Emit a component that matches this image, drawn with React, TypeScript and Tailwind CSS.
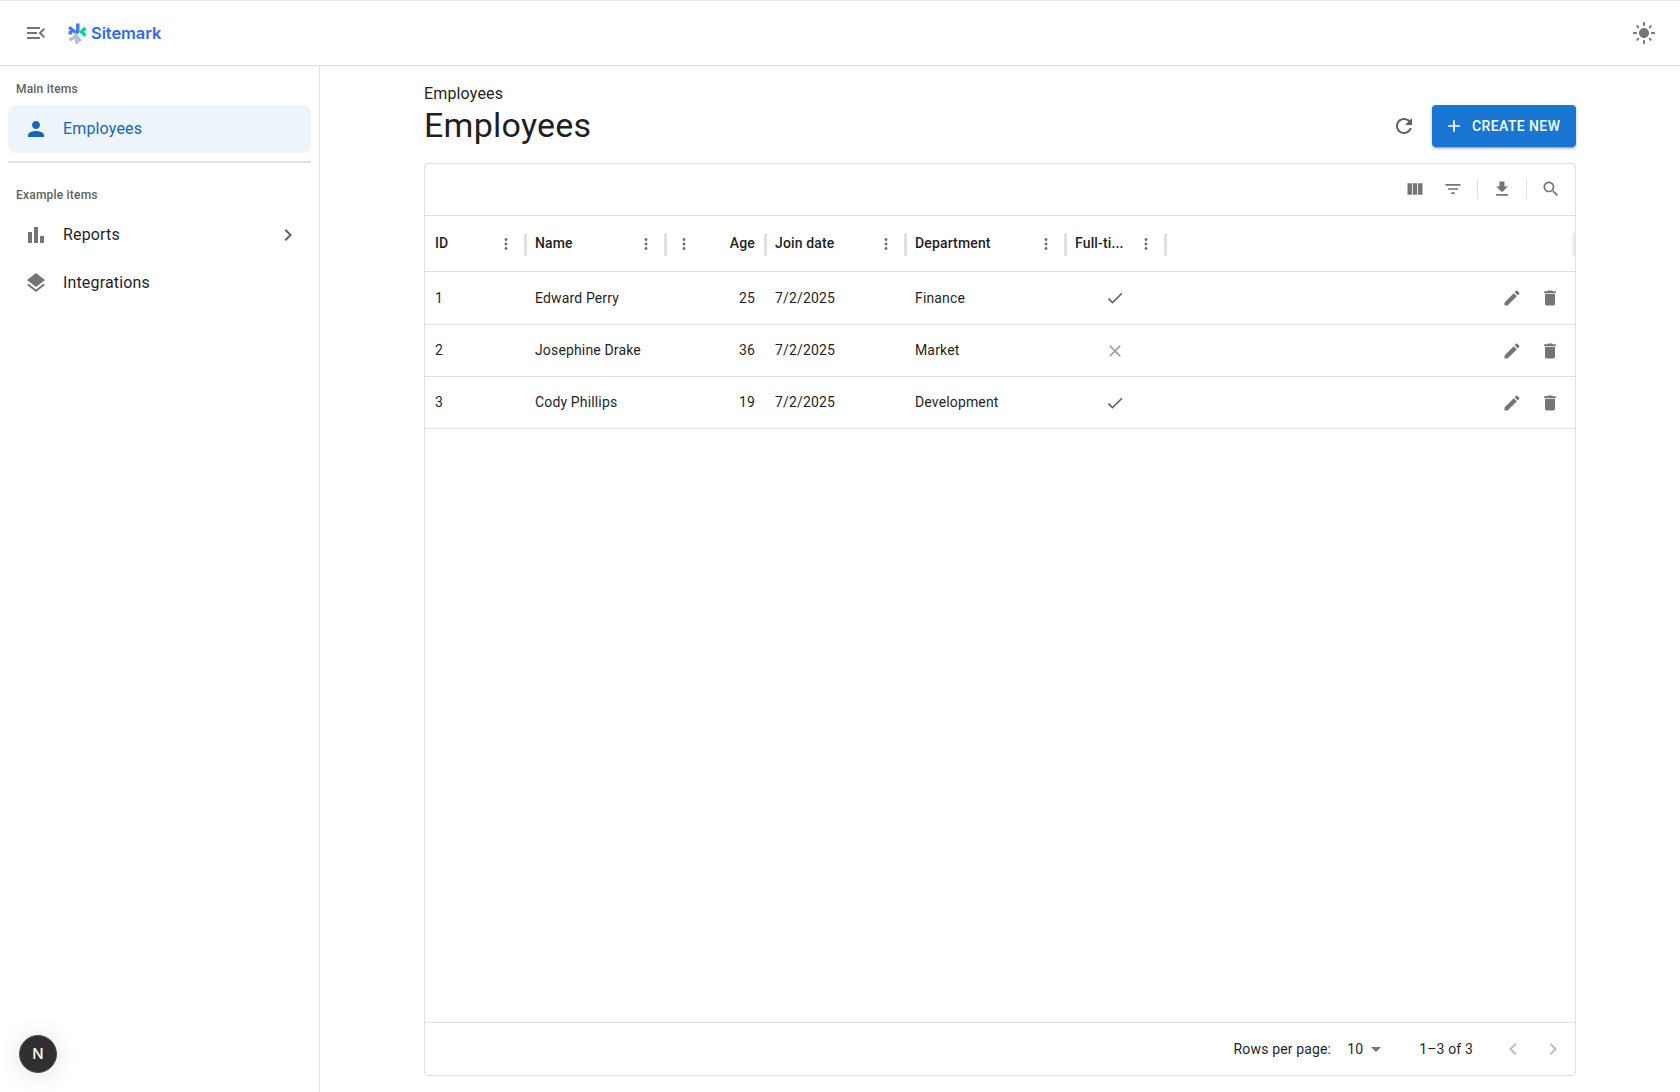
import type { ReactNode } from "react";

// Material icon paths
const ICONS = {
  menuOpen: "M3 18h13v-2H3zm0-5h10v-2H3zm0-7v2h13V6zm18 9.59L17.42 12 21 8.41 19.59 7l-5 5 5 5z",
  person: "M12 12c2.21 0 4-1.79 4-4s-1.79-4-4-4-4 1.79-4 4 1.79 4 4 4m0 2c-2.67 0-8 1.34-8 4v2h16v-2c0-2.66-5.33-4-8-4",
  barChart: "M4 9h4v11H4zm12 4h4v7h-4zm-6-9h4v16h-4z",
  layers: "m11.99 18.54-7.37-5.73L3 14.07l9 7 9-7-1.63-1.27zM12 16l7.36-5.73L21 9l-9-7-9 7 1.63 1.27z",
  chevronRight: "M10 6 8.59 7.41 13.17 12l-4.58 4.59L10 18l6-6z",
  chevronLeft: "M15.41 7.41 14 6l-6 6 6 6 1.41-1.41L10.83 12z",
  refresh: "M17.65 6.35C16.2 4.9 14.21 4 12 4c-4.42 0-7.99 3.58-7.99 8s3.57 8 7.99 8c3.73 0 6.84-2.55 7.73-6h-2.08c-.82 2.33-3.04 4-5.65 4-3.31 0-6-2.69-6-6s2.69-6 6-6c1.66 0 3.14.69 4.22 1.78L13 11h7V4z",
  add: "M19 13h-6v6h-2v-6H5v-2h6V5h2v6h6z",
  viewColumn: "M14.67 5v14H9.33V5zm1 14H21V5h-5.33zm-7.34 0V5H3v14z",
  filter: "M10 18h4v-2h-4zM3 6v2h18V6zm3 7h12v-2H6z",
  download: "M19 9h-4V3H9v6H5l7 7zM5 18v2h14v-2z",
  search: "M15.5 14h-.79l-.28-.27C15.41 12.59 16 11.11 16 9.5 16 5.91 13.09 3 9.5 3S3 5.91 3 9.5 5.91 16 9.5 16c1.61 0 3.09-.59 4.23-1.57l.27.28v.79l5 4.99L20.49 19zm-6 0C7.01 14 5 11.99 5 9.5S7.01 5 9.5 5 14 7.01 14 9.5 11.99 14 9.5 14",
  moreVert: "M12 8c1.1 0 2-.9 2-2s-.9-2-2-2-2 .9-2 2 .9 2 2 2m0 2c-1.1 0-2 .9-2 2s.9 2 2 2 2-.9 2-2-.9-2-2-2m0 6c-1.1 0-2 .9-2 2s.9 2 2 2 2-.9 2-2-.9-2-2-2",
  edit: "M3 17.25V21h3.75L17.81 9.94l-3.75-3.75zM20.71 7.04c.39-.39.39-1.02 0-1.41l-2.34-2.34a.996.996 0 0 0-1.41 0l-1.83 1.83 3.75 3.75z",
  trash: "M6 19c0 1.1.9 2 2 2h8c1.1 0 2-.9 2-2V7H6zM19 4h-3.5l-1-1h-5l-1 1H5v2h14z",
  check: "M9 16.17 4.83 12l-1.42 1.41L9 19 21 7l-1.41-1.41z",
  close: "M19 6.41 17.59 5 12 10.59 6.41 5 5 6.41 10.59 12 5 17.59 6.41 19 12 13.41 17.59 19 19 17.59 13.41 12z",
  arrowDrop: "m7 10 5 5 5-5z",
  sun: "M12 7c-2.76 0-5 2.24-5 5s2.24 5 5 5 5-2.24 5-5-2.24-5-5-5M2 13h2c.55 0 1-.45 1-1s-.45-1-1-1H2c-.55 0-1 .45-1 1s.45 1 1 1m18 0h2c.55 0 1-.45 1-1s-.45-1-1-1h-2c-.55 0-1 .45-1 1s.45 1 1 1M11 2v2c0 .55.45 1 1 1s1-.45 1-1V2c0-.55-.45-1-1-1s-1 .45-1 1m0 18v2c0 .55.45 1 1 1s1-.45 1-1v-2c0-.55-.45-1-1-1s-1 .45-1 1M5.99 4.58c-.39-.39-1.03-.39-1.41 0-.39.39-.39 1.03 0 1.41l1.06 1.06c.39.39 1.03.39 1.41 0s.39-1.03 0-1.41zm12.37 12.37c-.39-.39-1.03-.39-1.41 0-.39.39-.39 1.03 0 1.41l1.06 1.06c.39.39 1.03.39 1.41 0 .39-.39.39-1.03 0-1.41zm1.06-10.96c.39-.39.39-1.03 0-1.41-.39-.39-1.03-.39-1.41 0l-1.06 1.06c-.39.39-.39 1.03 0 1.41s1.03.39 1.41 0zM7.05 18.36c.39-.39.39-1.03 0-1.41-.39-.39-1.03-.39-1.41 0l-1.06 1.06c-.39.39-.39 1.03 0 1.41s1.03.39 1.41 0z",
};

const COLUMNS = "grid grid-cols-[100px_140px_100px_140px_160px_100px_1fr]";

const EMPLOYEES = [
  { id: 1, name: "Edward Perry", age: 25, date: "7/2/2025", dept: "Finance", fullTime: true },
  { id: 2, name: "Josephine Drake", age: 36, date: "7/2/2025", dept: "Market", fullTime: false },
  { id: 3, name: "Cody Phillips", age: 19, date: "7/2/2025", dept: "Development", fullTime: true },
];

function Icon({ d, className }: { d: string; className: string }) {
  return (
    <svg viewBox="0 0 24 24" fill="currentColor" className={`shrink-0 ${className}`}>
      <path d={d} />
    </svg>
  );
}

function SitemarkLogo() {
  return (
    <div className="flex items-center">
      <svg viewBox="0 0 19 21" className="w-[19px] h-[21px]" fill="none" strokeWidth="3.4">
        <path d="M9.8 0.5v6.4c0 2-1 3-2.6 3.4" stroke="#4876ee" />
        <path d="M1 4.2l6.2 5.2M0.5 9.8h3.5" stroke="#4876ee" />
        <path d="M17.5 5l-4.2 3.8 4.2 3.8" stroke="#00d3ab" />
        <path d="M1.5 17l6.3-3.4M8.8 20.8v-7.2l3.6 4.6" stroke="#b4c0d3" />
      </svg>
      <span className="ml-[4px] font-['Inter',sans-serif] text-[16.5px] font-semibold tracking-[-0.1px] text-[#2f6bed]">
        Sitemark
      </span>
    </div>
  );
}

function NavItem({ icon, label, selected, trailing }: { icon: string; label: string; selected?: boolean; trailing?: ReactNode }) {
  return (
    <div className={`flex h-12 items-center rounded-lg pl-4 pr-[11px] ${selected ? "bg-[#edf4fb] text-[#1565c0]" : "text-[#1f1f1f]"}`}>
      <Icon d={icon} className={`w-6 h-6 ${selected ? "text-[#1565c0]" : "text-[#757575]"}`} />
      <span className="ml-[15px] flex-1 text-[16px] tracking-[0.15px]">{label}</span>
      {trailing}
    </div>
  );
}

function HeaderCell({ label, align, menuFirst, dots }: { label: string; align?: "right"; menuFirst?: boolean; dots?: boolean }) {
  return (
    <div className="relative flex items-center px-[10px]">
      {menuFirst && <Icon d={ICONS.moreVert} className="w-[18px] h-[18px] text-[#757575]" />}
      <span className={`flex-1 text-[14px] font-medium tracking-[0.15px] ${align === "right" ? "text-right" : ""}`}>{label}</span>
      {dots && <Icon d={ICONS.moreVert} className="w-[18px] h-[18px] text-[#757575]" />}
      <div className="absolute right-[-2px] top-[17px] z-10 h-[23px] w-[3px] rounded-sm bg-[#e0e0e0]" />
    </div>
  );
}

export default function App() {
  return (
    <div className="flex h-[1092px] flex-col overflow-hidden border-t border-[#e5e7eb] bg-white font-['Roboto',sans-serif] text-[#1f1f1f]">
      {/* HEADER */}
      <header className="flex h-[65px] shrink-0 items-center border-b border-[#e0e0e0] pl-[24px] pr-[24px]">
        <Icon d={ICONS.menuOpen} className="w-6 h-6 text-[#757575]" />
        <div className="ml-[20px]">
          <SitemarkLogo />
        </div>
        <div className="flex-1" />
        <Icon d={ICONS.sun} className="w-6 h-6 text-[#757575]" />
      </header>

      <div className="flex min-h-0 flex-1">
        {/* SIDEBAR */}
        <aside className="relative w-[320px] shrink-0 border-r border-[#e0e0e0] px-2">
          <p className="mt-[14px] pl-2 text-[12px] font-medium leading-[18px] tracking-[0.2px] text-[#616161]">Main items</p>
          <div className="mt-[7px] w-[303px]">
            <NavItem icon={ICONS.person} label="Employees" selected />
          </div>
          <div className="mt-2 h-[2px] w-[303px] bg-[#e0e0e0]" />
          <p className="mt-[23px] pl-2 text-[12px] font-medium leading-[18px] tracking-[0.2px] text-[#616161]">Example items</p>
          <div className="mt-[7px] w-[303px]">
            <NavItem
              icon={ICONS.barChart}
              label="Reports"
              trailing={<Icon d={ICONS.chevronRight} className="w-6 h-6 text-[#616161]" />}
            />
            <NavItem icon={ICONS.layers} label="Integrations" />
          </div>
          {/* dev badge */}
          <div className="absolute left-[19px] bottom-[19px] flex h-[38px] w-[38px] items-center justify-center rounded-full border border-[#4a4a4a] bg-[#303030] font-['Inter',sans-serif] text-[15px] font-medium text-white shadow-[0_2px_24px_rgba(0,0,0,0.12)]">
            N
          </div>
        </aside>

        {/* MAIN */}
        <main className="flex min-w-0 flex-1 justify-center">
          <div className="flex w-[1200px] flex-col px-6 pb-[16px] pt-[16px]">
            <p className="text-[16px] leading-[23px] tracking-[0.15px]">Employees</p>
            <div className="flex h-[42px] items-center">
              <h1 className="mb-[2px] flex-1 text-[34px] font-normal leading-[42px] tracking-[0.25px]">Employees</h1>
              <Icon d={ICONS.refresh} className="w-6 h-6 text-[#616161] mr-[16px] mb-[1px]" />
              <button
                type="button"
                className="flex h-[42px] w-[144px] items-center rounded bg-[#1976d2] pl-[12px] text-[14px] font-medium uppercase tracking-[0.4px] text-white shadow-[0_3px_1px_-2px_rgba(0,0,0,0.2),0_2px_2px_rgba(0,0,0,0.14),0_1px_5px_rgba(0,0,0,0.12)]"
              >
                <Icon d={ICONS.add} className="w-[20px] h-[20px] mr-[8px]" />
                Create new
              </button>
            </div>

            {/* TABLE */}
            <div className="mt-4 flex min-h-0 flex-1 flex-col overflow-hidden rounded border border-[#e0e0e0]">
              <div className="flex h-[52px] shrink-0 items-center justify-end border-b border-[#e0e0e0] pr-[14px] pb-[1px]">
                <Icon d={ICONS.viewColumn} className="w-[20px] h-[20px] text-[#757575]" />
                <Icon d={ICONS.filter} className="w-[20px] h-[20px] text-[#757575] ml-[18px]" />
                <div className="ml-[14px] h-[20px] w-px bg-[#e0e0e0]" />
                <Icon d={ICONS.download} className="w-[20px] h-[20px] text-[#757575] ml-[14px]" />
                <div className="ml-[14px] h-[20px] w-px bg-[#e0e0e0]" />
                <Icon d={ICONS.search} className="w-[20px] h-[20px] text-[#757575] ml-[14px]" />
              </div>

              <div className={`${COLUMNS} h-[56px] shrink-0 border-b border-[#e0e0e0]`}>
                <HeaderCell label="ID" dots />
                <HeaderCell label="Name" dots />
                <HeaderCell label="Age" align="right" menuFirst />
                <HeaderCell label="Join date" dots />
                <HeaderCell label="Department" dots />
                <HeaderCell label="Full-ti..." dots />
                <div className="relative">
                  <div className="absolute right-0 top-[17px] h-[23px] w-[3px] bg-[#eeeeee]" />
                </div>
              </div>

              {EMPLOYEES.map((row, i) => (
                <div
                  key={row.id}
                  className={`${COLUMNS} ${i === 0 ? "h-[53px]" : "h-[52px]"} shrink-0 items-center border-b border-[#e0e0e0] text-[14px] tracking-[0.15px]`}
                >
                  <div className="px-[10px]">{row.id}</div>
                  <div className="px-[10px]">{row.name}</div>
                  <div className="px-[10px] text-right">{row.age}</div>
                  <div className="px-[10px]">{row.date}</div>
                  <div className="px-[10px]">{row.dept}</div>
                  <div className="flex justify-center">
                    <Icon
                      d={row.fullTime ? ICONS.check : ICONS.close}
                      className={`w-[20px] h-[20px] ${row.fullTime ? "text-[#616161]" : "text-[#9e9e9e]"}`}
                    />
                  </div>
                  <div className="flex items-center justify-end pr-[15px]">
                    <Icon d={ICONS.edit} className="w-[20px] h-[20px] text-[#757575]" />
                    <Icon d={ICONS.trash} className="w-[20px] h-[20px] text-[#757575] ml-[18px]" />
                  </div>
                </div>
              ))}

              <div className="flex-1" />

              {/* PAGINATION */}
              <div className="flex h-[53px] shrink-0 items-center justify-end border-t border-[#e0e0e0] pr-[10px] text-[14px] tracking-[0.15px]">
                <span>Rows per page:</span>
                <span className="ml-[16px]">10</span>
                <Icon d={ICONS.arrowDrop} className="w-[24px] h-[24px] text-[#757575] ml-[1px]" />
                <span className="ml-[31px]">1–3 of 3</span>
                <Icon d={ICONS.chevronLeft} className="w-6 h-6 text-[#bdbdbd] ml-[28px]" />
                <Icon d={ICONS.chevronRight} className="w-6 h-6 text-[#bdbdbd] ml-[16px]" />
              </div>
            </div>
          </div>
        </main>
      </div>
    </div>
  );
}
